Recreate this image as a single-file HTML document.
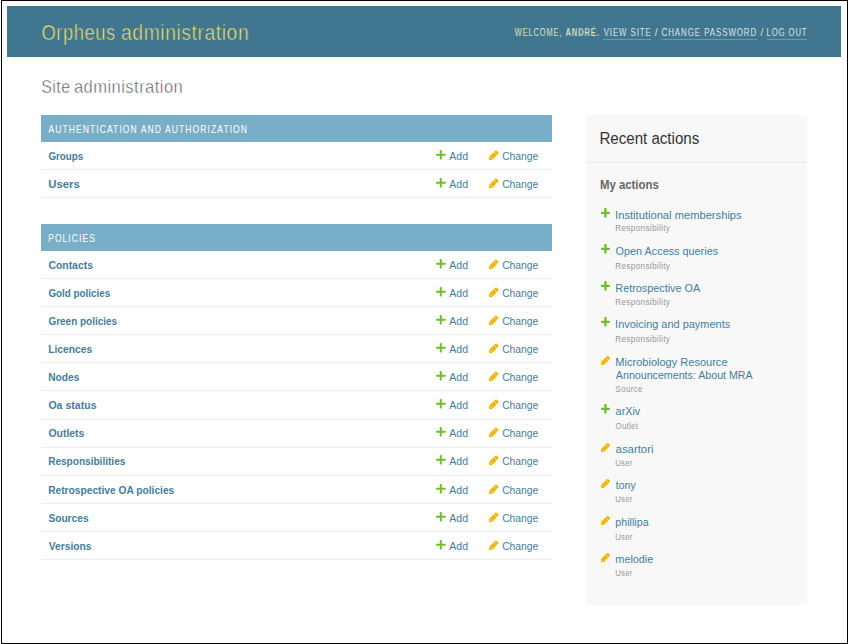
<!DOCTYPE html>
<html><head><meta charset="utf-8"><style>
html,body{margin:0;padding:0;background:#fff;width:848px;height:644px;overflow:hidden;position:relative}
body{font-family:"Liberation Sans", sans-serif}
.b{position:absolute}
.t{position:absolute;white-space:pre;line-height:normal;font-family:"Liberation Sans", sans-serif;transform-origin:0 0}
.bl{display:inline-block;width:0;height:0}
.ic{position:absolute;display:block;overflow:visible}
</style></head><body>
<div class="b" style="left:7px;top:6px;width:834px;height:51px;background:#417690"></div>
<div class="b" style="left:603px;top:39px;width:48px;height:1px;background:rgba(255,255,255,0.25)"></div>
<div class="b" style="left:661px;top:39px;width:95.5px;height:1px;background:rgba(255,255,255,0.25)"></div>
<div class="b" style="left:766.5px;top:39px;width:40.5px;height:1px;background:rgba(255,255,255,0.25)"></div>
<div class="b" style="left:41.4px;top:115px;width:510.6px;height:27px;background:#79aec8"></div>
<div class="b" style="left:41.4px;top:169px;width:510.6px;height:1px;background:#eeeeee"></div>
<div class="b" style="left:41.4px;top:197px;width:510.6px;height:1px;background:#eeeeee"></div>
<div class="b" style="left:41.4px;top:224px;width:510.6px;height:27px;background:#79aec8"></div>
<div class="b" style="left:41.4px;top:278px;width:510.6px;height:1px;background:#eeeeee"></div>
<div class="b" style="left:41.4px;top:306px;width:510.6px;height:1px;background:#eeeeee"></div>
<div class="b" style="left:41.4px;top:334px;width:510.6px;height:1px;background:#eeeeee"></div>
<div class="b" style="left:41.4px;top:362px;width:510.6px;height:1px;background:#eeeeee"></div>
<div class="b" style="left:41.4px;top:390px;width:510.6px;height:1px;background:#eeeeee"></div>
<div class="b" style="left:41.4px;top:419px;width:510.6px;height:1px;background:#eeeeee"></div>
<div class="b" style="left:41.4px;top:447px;width:510.6px;height:1px;background:#eeeeee"></div>
<div class="b" style="left:41.4px;top:475px;width:510.6px;height:1px;background:#eeeeee"></div>
<div class="b" style="left:41.4px;top:503px;width:510.6px;height:1px;background:#eeeeee"></div>
<div class="b" style="left:41.4px;top:531px;width:510.6px;height:1px;background:#eeeeee"></div>
<div class="b" style="left:41.4px;top:559px;width:510.6px;height:1px;background:#eeeeee"></div>
<div class="b" style="left:586px;top:115px;width:221px;height:490px;background:#f8f8f8"></div>
<div class="b" style="left:586px;top:162px;width:221px;height:1px;background:#eaeaea"></div>
<div class="b" style="left:1px;top:0;width:847px;height:644px;box-sizing:border-box;border:1px solid #000"></div>
<svg class="ic" style="left:436.00px;top:150.10px" width="9.60" height="9.60" viewBox="0 0 9.60 9.60"><rect x="0" y="3.80" width="9.60" height="2.0" rx="0.5" fill="#70bf2b"/><rect x="3.80" y="0" width="2.0" height="9.60" rx="0.5" fill="#70bf2b"/></svg>
<svg class="ic" style="left:486.90px;top:148.00px" width="14" height="14" viewBox="0 0 14 14"><path d="M2.00 12.00 L5.10 12.00 L11.25 5.85 Q12.40 4.70 11.25 4.15 L9.85 2.75 Q8.70 2.20 8.15 2.75 L2.00 8.90 Z" fill="#efb80b"/><path d="M6.55 3.55 L10.45 7.45" stroke="#fff" stroke-width="0.45"/><path d="M3.29 9.29 L4.71 10.71" stroke="#fff" stroke-width="0.7"/></svg>
<svg class="ic" style="left:436.00px;top:178.10px" width="9.60" height="9.60" viewBox="0 0 9.60 9.60"><rect x="0" y="3.80" width="9.60" height="2.0" rx="0.5" fill="#70bf2b"/><rect x="3.80" y="0" width="2.0" height="9.60" rx="0.5" fill="#70bf2b"/></svg>
<svg class="ic" style="left:486.90px;top:176.00px" width="14" height="14" viewBox="0 0 14 14"><path d="M2.00 12.00 L5.10 12.00 L11.25 5.85 Q12.40 4.70 11.25 4.15 L9.85 2.75 Q8.70 2.20 8.15 2.75 L2.00 8.90 Z" fill="#efb80b"/><path d="M6.55 3.55 L10.45 7.45" stroke="#fff" stroke-width="0.45"/><path d="M3.29 9.29 L4.71 10.71" stroke="#fff" stroke-width="0.7"/></svg>
<svg class="ic" style="left:436.00px;top:259.10px" width="9.60" height="9.60" viewBox="0 0 9.60 9.60"><rect x="0" y="3.80" width="9.60" height="2.0" rx="0.5" fill="#70bf2b"/><rect x="3.80" y="0" width="2.0" height="9.60" rx="0.5" fill="#70bf2b"/></svg>
<svg class="ic" style="left:486.90px;top:257.00px" width="14" height="14" viewBox="0 0 14 14"><path d="M2.00 12.00 L5.10 12.00 L11.25 5.85 Q12.40 4.70 11.25 4.15 L9.85 2.75 Q8.70 2.20 8.15 2.75 L2.00 8.90 Z" fill="#efb80b"/><path d="M6.55 3.55 L10.45 7.45" stroke="#fff" stroke-width="0.45"/><path d="M3.29 9.29 L4.71 10.71" stroke="#fff" stroke-width="0.7"/></svg>
<svg class="ic" style="left:436.00px;top:287.10px" width="9.60" height="9.60" viewBox="0 0 9.60 9.60"><rect x="0" y="3.80" width="9.60" height="2.0" rx="0.5" fill="#70bf2b"/><rect x="3.80" y="0" width="2.0" height="9.60" rx="0.5" fill="#70bf2b"/></svg>
<svg class="ic" style="left:486.90px;top:285.00px" width="14" height="14" viewBox="0 0 14 14"><path d="M2.00 12.00 L5.10 12.00 L11.25 5.85 Q12.40 4.70 11.25 4.15 L9.85 2.75 Q8.70 2.20 8.15 2.75 L2.00 8.90 Z" fill="#efb80b"/><path d="M6.55 3.55 L10.45 7.45" stroke="#fff" stroke-width="0.45"/><path d="M3.29 9.29 L4.71 10.71" stroke="#fff" stroke-width="0.7"/></svg>
<svg class="ic" style="left:436.00px;top:315.10px" width="9.60" height="9.60" viewBox="0 0 9.60 9.60"><rect x="0" y="3.80" width="9.60" height="2.0" rx="0.5" fill="#70bf2b"/><rect x="3.80" y="0" width="2.0" height="9.60" rx="0.5" fill="#70bf2b"/></svg>
<svg class="ic" style="left:486.90px;top:313.00px" width="14" height="14" viewBox="0 0 14 14"><path d="M2.00 12.00 L5.10 12.00 L11.25 5.85 Q12.40 4.70 11.25 4.15 L9.85 2.75 Q8.70 2.20 8.15 2.75 L2.00 8.90 Z" fill="#efb80b"/><path d="M6.55 3.55 L10.45 7.45" stroke="#fff" stroke-width="0.45"/><path d="M3.29 9.29 L4.71 10.71" stroke="#fff" stroke-width="0.7"/></svg>
<svg class="ic" style="left:436.00px;top:343.10px" width="9.60" height="9.60" viewBox="0 0 9.60 9.60"><rect x="0" y="3.80" width="9.60" height="2.0" rx="0.5" fill="#70bf2b"/><rect x="3.80" y="0" width="2.0" height="9.60" rx="0.5" fill="#70bf2b"/></svg>
<svg class="ic" style="left:486.90px;top:341.00px" width="14" height="14" viewBox="0 0 14 14"><path d="M2.00 12.00 L5.10 12.00 L11.25 5.85 Q12.40 4.70 11.25 4.15 L9.85 2.75 Q8.70 2.20 8.15 2.75 L2.00 8.90 Z" fill="#efb80b"/><path d="M6.55 3.55 L10.45 7.45" stroke="#fff" stroke-width="0.45"/><path d="M3.29 9.29 L4.71 10.71" stroke="#fff" stroke-width="0.7"/></svg>
<svg class="ic" style="left:436.00px;top:371.10px" width="9.60" height="9.60" viewBox="0 0 9.60 9.60"><rect x="0" y="3.80" width="9.60" height="2.0" rx="0.5" fill="#70bf2b"/><rect x="3.80" y="0" width="2.0" height="9.60" rx="0.5" fill="#70bf2b"/></svg>
<svg class="ic" style="left:486.90px;top:369.00px" width="14" height="14" viewBox="0 0 14 14"><path d="M2.00 12.00 L5.10 12.00 L11.25 5.85 Q12.40 4.70 11.25 4.15 L9.85 2.75 Q8.70 2.20 8.15 2.75 L2.00 8.90 Z" fill="#efb80b"/><path d="M6.55 3.55 L10.45 7.45" stroke="#fff" stroke-width="0.45"/><path d="M3.29 9.29 L4.71 10.71" stroke="#fff" stroke-width="0.7"/></svg>
<svg class="ic" style="left:436.00px;top:399.10px" width="9.60" height="9.60" viewBox="0 0 9.60 9.60"><rect x="0" y="3.80" width="9.60" height="2.0" rx="0.5" fill="#70bf2b"/><rect x="3.80" y="0" width="2.0" height="9.60" rx="0.5" fill="#70bf2b"/></svg>
<svg class="ic" style="left:486.90px;top:397.00px" width="14" height="14" viewBox="0 0 14 14"><path d="M2.00 12.00 L5.10 12.00 L11.25 5.85 Q12.40 4.70 11.25 4.15 L9.85 2.75 Q8.70 2.20 8.15 2.75 L2.00 8.90 Z" fill="#efb80b"/><path d="M6.55 3.55 L10.45 7.45" stroke="#fff" stroke-width="0.45"/><path d="M3.29 9.29 L4.71 10.71" stroke="#fff" stroke-width="0.7"/></svg>
<svg class="ic" style="left:436.00px;top:427.10px" width="9.60" height="9.60" viewBox="0 0 9.60 9.60"><rect x="0" y="3.80" width="9.60" height="2.0" rx="0.5" fill="#70bf2b"/><rect x="3.80" y="0" width="2.0" height="9.60" rx="0.5" fill="#70bf2b"/></svg>
<svg class="ic" style="left:486.90px;top:425.00px" width="14" height="14" viewBox="0 0 14 14"><path d="M2.00 12.00 L5.10 12.00 L11.25 5.85 Q12.40 4.70 11.25 4.15 L9.85 2.75 Q8.70 2.20 8.15 2.75 L2.00 8.90 Z" fill="#efb80b"/><path d="M6.55 3.55 L10.45 7.45" stroke="#fff" stroke-width="0.45"/><path d="M3.29 9.29 L4.71 10.71" stroke="#fff" stroke-width="0.7"/></svg>
<svg class="ic" style="left:436.00px;top:455.10px" width="9.60" height="9.60" viewBox="0 0 9.60 9.60"><rect x="0" y="3.80" width="9.60" height="2.0" rx="0.5" fill="#70bf2b"/><rect x="3.80" y="0" width="2.0" height="9.60" rx="0.5" fill="#70bf2b"/></svg>
<svg class="ic" style="left:486.90px;top:453.00px" width="14" height="14" viewBox="0 0 14 14"><path d="M2.00 12.00 L5.10 12.00 L11.25 5.85 Q12.40 4.70 11.25 4.15 L9.85 2.75 Q8.70 2.20 8.15 2.75 L2.00 8.90 Z" fill="#efb80b"/><path d="M6.55 3.55 L10.45 7.45" stroke="#fff" stroke-width="0.45"/><path d="M3.29 9.29 L4.71 10.71" stroke="#fff" stroke-width="0.7"/></svg>
<svg class="ic" style="left:436.00px;top:484.10px" width="9.60" height="9.60" viewBox="0 0 9.60 9.60"><rect x="0" y="3.80" width="9.60" height="2.0" rx="0.5" fill="#70bf2b"/><rect x="3.80" y="0" width="2.0" height="9.60" rx="0.5" fill="#70bf2b"/></svg>
<svg class="ic" style="left:486.90px;top:482.00px" width="14" height="14" viewBox="0 0 14 14"><path d="M2.00 12.00 L5.10 12.00 L11.25 5.85 Q12.40 4.70 11.25 4.15 L9.85 2.75 Q8.70 2.20 8.15 2.75 L2.00 8.90 Z" fill="#efb80b"/><path d="M6.55 3.55 L10.45 7.45" stroke="#fff" stroke-width="0.45"/><path d="M3.29 9.29 L4.71 10.71" stroke="#fff" stroke-width="0.7"/></svg>
<svg class="ic" style="left:436.00px;top:512.10px" width="9.60" height="9.60" viewBox="0 0 9.60 9.60"><rect x="0" y="3.80" width="9.60" height="2.0" rx="0.5" fill="#70bf2b"/><rect x="3.80" y="0" width="2.0" height="9.60" rx="0.5" fill="#70bf2b"/></svg>
<svg class="ic" style="left:486.90px;top:510.00px" width="14" height="14" viewBox="0 0 14 14"><path d="M2.00 12.00 L5.10 12.00 L11.25 5.85 Q12.40 4.70 11.25 4.15 L9.85 2.75 Q8.70 2.20 8.15 2.75 L2.00 8.90 Z" fill="#efb80b"/><path d="M6.55 3.55 L10.45 7.45" stroke="#fff" stroke-width="0.45"/><path d="M3.29 9.29 L4.71 10.71" stroke="#fff" stroke-width="0.7"/></svg>
<svg class="ic" style="left:436.00px;top:540.10px" width="9.60" height="9.60" viewBox="0 0 9.60 9.60"><rect x="0" y="3.80" width="9.60" height="2.0" rx="0.5" fill="#70bf2b"/><rect x="3.80" y="0" width="2.0" height="9.60" rx="0.5" fill="#70bf2b"/></svg>
<svg class="ic" style="left:486.90px;top:538.00px" width="14" height="14" viewBox="0 0 14 14"><path d="M2.00 12.00 L5.10 12.00 L11.25 5.85 Q12.40 4.70 11.25 4.15 L9.85 2.75 Q8.70 2.20 8.15 2.75 L2.00 8.90 Z" fill="#efb80b"/><path d="M6.55 3.55 L10.45 7.45" stroke="#fff" stroke-width="0.45"/><path d="M3.29 9.29 L4.71 10.71" stroke="#fff" stroke-width="0.7"/></svg>
<svg class="ic" style="left:600.85px;top:208.00px" width="8.80" height="9.60" viewBox="0 0 8.80 9.60"><rect x="0" y="3.65" width="8.80" height="2.3" rx="0.5" fill="#70bf2b"/><rect x="3.25" y="0" width="2.3" height="9.60" rx="0.5" fill="#70bf2b"/></svg>
<svg class="ic" style="left:600.85px;top:244.00px" width="8.80" height="9.60" viewBox="0 0 8.80 9.60"><rect x="0" y="3.65" width="8.80" height="2.3" rx="0.5" fill="#70bf2b"/><rect x="3.25" y="0" width="2.3" height="9.60" rx="0.5" fill="#70bf2b"/></svg>
<svg class="ic" style="left:600.85px;top:281.00px" width="8.80" height="9.60" viewBox="0 0 8.80 9.60"><rect x="0" y="3.65" width="8.80" height="2.3" rx="0.5" fill="#70bf2b"/><rect x="3.25" y="0" width="2.3" height="9.60" rx="0.5" fill="#70bf2b"/></svg>
<svg class="ic" style="left:600.85px;top:317.00px" width="8.80" height="9.60" viewBox="0 0 8.80 9.60"><rect x="0" y="3.65" width="8.80" height="2.3" rx="0.5" fill="#70bf2b"/><rect x="3.25" y="0" width="2.3" height="9.60" rx="0.5" fill="#70bf2b"/></svg>
<svg class="ic" style="left:598.90px;top:353.00px" width="14" height="14" viewBox="0 0 14 14"><path d="M2.00 12.00 L4.90 12.00 L10.65 6.25 Q11.80 5.10 10.65 4.55 L9.45 3.35 Q8.30 2.80 7.75 3.35 L2.00 9.10 Z" fill="#efb80b"/><path d="M6.30 4.00 L10.00 7.70" stroke="#f8f8f8" stroke-width="0.45"/><path d="M3.15 10.15 L3.85 10.85" stroke="#f8f8f8" stroke-width="0.7"/></svg>
<svg class="ic" style="left:600.85px;top:404.00px" width="8.80" height="9.60" viewBox="0 0 8.80 9.60"><rect x="0" y="3.65" width="8.80" height="2.3" rx="0.5" fill="#70bf2b"/><rect x="3.25" y="0" width="2.3" height="9.60" rx="0.5" fill="#70bf2b"/></svg>
<svg class="ic" style="left:598.90px;top:440.00px" width="14" height="14" viewBox="0 0 14 14"><path d="M2.00 12.00 L4.90 12.00 L10.65 6.25 Q11.80 5.10 10.65 4.55 L9.45 3.35 Q8.30 2.80 7.75 3.35 L2.00 9.10 Z" fill="#efb80b"/><path d="M6.30 4.00 L10.00 7.70" stroke="#f8f8f8" stroke-width="0.45"/><path d="M3.15 10.15 L3.85 10.85" stroke="#f8f8f8" stroke-width="0.7"/></svg>
<svg class="ic" style="left:598.90px;top:476.00px" width="14" height="14" viewBox="0 0 14 14"><path d="M2.00 12.00 L4.90 12.00 L10.65 6.25 Q11.80 5.10 10.65 4.55 L9.45 3.35 Q8.30 2.80 7.75 3.35 L2.00 9.10 Z" fill="#efb80b"/><path d="M6.30 4.00 L10.00 7.70" stroke="#f8f8f8" stroke-width="0.45"/><path d="M3.15 10.15 L3.85 10.85" stroke="#f8f8f8" stroke-width="0.7"/></svg>
<svg class="ic" style="left:598.90px;top:513.00px" width="14" height="14" viewBox="0 0 14 14"><path d="M2.00 12.00 L4.90 12.00 L10.65 6.25 Q11.80 5.10 10.65 4.55 L9.45 3.35 Q8.30 2.80 7.75 3.35 L2.00 9.10 Z" fill="#efb80b"/><path d="M6.30 4.00 L10.00 7.70" stroke="#f8f8f8" stroke-width="0.45"/><path d="M3.15 10.15 L3.85 10.85" stroke="#f8f8f8" stroke-width="0.7"/></svg>
<svg class="ic" style="left:598.90px;top:550.00px" width="14" height="14" viewBox="0 0 14 14"><path d="M2.00 12.00 L4.90 12.00 L10.65 6.25 Q11.80 5.10 10.65 4.55 L9.45 3.35 Q8.30 2.80 7.75 3.35 L2.00 9.10 Z" fill="#efb80b"/><path d="M6.30 4.00 L10.00 7.70" stroke="#f8f8f8" stroke-width="0.45"/><path d="M3.15 10.15 L3.85 10.85" stroke="#f8f8f8" stroke-width="0.7"/></svg>
<div id="t0" class="t" style="left:41px;top:21.00px;font-size:21.2px;font-weight:400;color:#fbe363;letter-spacing:0.6px;transform:translateX(0.450px) scaleX(0.8682);-webkit-text-stroke:0.55px #417690;">Orpheus<i class="bl"></i></div>
<div id="t1" class="t" style="left:121px;top:21.00px;font-size:21.2px;font-weight:400;color:#fbe363;letter-spacing:0.6px;transform:translateX(0.050px) scaleX(0.9135);-webkit-text-stroke:0.55px #417690;">administration<i class="bl"></i></div>
<div id="t2" class="t" style="left:514px;top:27.00px;font-size:10.0px;font-weight:400;color:#ffffcc;letter-spacing:1.2px;transform:translateX(0.800px) scaleX(0.7432);-webkit-text-stroke:0.2px #417690;">WELCOME,<i class="bl"></i></div>
<div id="t3" class="t" style="left:565px;top:27.00px;font-size:10.0px;font-weight:700;color:#ffffcc;letter-spacing:1.2px;transform:translateX(0.500px) scaleX(0.7512);-webkit-text-stroke:0.35px #417690;">ANDRÉ.<i class="bl"></i></div>
<div id="t4" class="t" style="left:603px;top:27.00px;font-size:10.0px;font-weight:400;color:#ffffff;letter-spacing:1.2px;transform:translateX(0.650px) scaleX(0.7825);-webkit-text-stroke:0.2px #417690;">VIEW SITE<i class="bl"></i></div>
<div id="t5" class="t" style="left:654px;top:27.00px;font-size:10.0px;font-weight:400;color:#ffffcc;letter-spacing:1.2px;transform:translateX(0.800px) scaleX(1.0000);-webkit-text-stroke:0.2px #417690;">/<i class="bl"></i></div>
<div id="t6" class="t" style="left:661px;top:27.00px;font-size:10.0px;font-weight:400;color:#ffffff;letter-spacing:1.2px;transform:translateX(0.550px) scaleX(0.7890);-webkit-text-stroke:0.2px #417690;">CHANGE PASSWORD<i class="bl"></i></div>
<div id="t7" class="t" style="left:760px;top:27.00px;font-size:10.0px;font-weight:400;color:#ffffcc;letter-spacing:1.2px;transform:translateX(0.500px) scaleX(1.0000);-webkit-text-stroke:0.2px #417690;">/<i class="bl"></i></div>
<div id="t8" class="t" style="left:766px;top:27.00px;font-size:10.0px;font-weight:400;color:#ffffff;letter-spacing:1.2px;transform:translateX(0.500px) scaleX(0.7670);-webkit-text-stroke:0.2px #417690;">LOG OUT<i class="bl"></i></div>
<div id="t9" class="t" style="left:41px;top:76.01px;font-size:18.4px;font-weight:400;color:#505050;letter-spacing:0.5px;transform:translateX(0.200px) scaleX(0.8711);-webkit-text-stroke:0.5px #fff;">Site<i class="bl"></i></div>
<div id="t10" class="t" style="left:73px;top:76.01px;font-size:18.4px;font-weight:400;color:#505050;letter-spacing:0.5px;transform:translateX(0.900px) scaleX(0.9002);-webkit-text-stroke:0.5px #fff;">administration<i class="bl"></i></div>
<div id="t11" class="t" style="left:48px;top:124.00px;font-size:10.2px;font-weight:400;color:#ffffff;letter-spacing:1.3px;transform:translateX(0.450px) scaleX(0.8361);">AUTHENTICATION AND AUTHORIZATION<i class="bl"></i></div>
<div id="t12" class="t" style="left:48px;top:233.00px;font-size:10.2px;font-weight:400;color:#ffffff;letter-spacing:1.3px;transform:translateX(0.150px) scaleX(0.8326);">POLICIES<i class="bl"></i></div>
<div id="t13" class="t" style="left:48px;top:150.01px;font-size:11.05px;font-weight:700;color:#447e9b;letter-spacing:0px;transform:translateX(0.400px) scaleX(0.8884);">Groups<i class="bl"></i></div>
<div id="t14" class="t" style="left:449px;top:150.01px;font-size:11.05px;font-weight:400;color:#447e9b;letter-spacing:0px;transform:translateX(0.300px) scaleX(0.9583);">Add<i class="bl"></i></div>
<div id="t15" class="t" style="left:502px;top:150.01px;font-size:11.05px;font-weight:400;color:#447e9b;letter-spacing:0px;transform:translateX(0.150px) scaleX(0.9356);">Change<i class="bl"></i></div>
<div id="t16" class="t" style="left:48px;top:178.01px;font-size:11.05px;font-weight:700;color:#447e9b;letter-spacing:0px;transform:translateX(0.150px) scaleX(1.0317);">Users<i class="bl"></i></div>
<div id="t17" class="t" style="left:449px;top:178.01px;font-size:11.05px;font-weight:400;color:#447e9b;letter-spacing:0px;transform:translateX(0.300px) scaleX(0.9583);">Add<i class="bl"></i></div>
<div id="t18" class="t" style="left:502px;top:178.01px;font-size:11.05px;font-weight:400;color:#447e9b;letter-spacing:0px;transform:translateX(0.150px) scaleX(0.9356);">Change<i class="bl"></i></div>
<div id="t19" class="t" style="left:48px;top:259.01px;font-size:11.05px;font-weight:700;color:#447e9b;letter-spacing:0px;transform:translateX(0.400px) scaleX(0.9431);">Contacts<i class="bl"></i></div>
<div id="t20" class="t" style="left:449px;top:259.01px;font-size:11.05px;font-weight:400;color:#447e9b;letter-spacing:0px;transform:translateX(0.300px) scaleX(0.9583);">Add<i class="bl"></i></div>
<div id="t21" class="t" style="left:502px;top:259.01px;font-size:11.05px;font-weight:400;color:#447e9b;letter-spacing:0px;transform:translateX(0.150px) scaleX(0.9356);">Change<i class="bl"></i></div>
<div id="t22" class="t" style="left:48px;top:287.01px;font-size:11.05px;font-weight:700;color:#447e9b;letter-spacing:0px;transform:translateX(0.400px) scaleX(0.8895);">Gold policies<i class="bl"></i></div>
<div id="t23" class="t" style="left:449px;top:287.01px;font-size:11.05px;font-weight:400;color:#447e9b;letter-spacing:0px;transform:translateX(0.300px) scaleX(0.9583);">Add<i class="bl"></i></div>
<div id="t24" class="t" style="left:502px;top:287.01px;font-size:11.05px;font-weight:400;color:#447e9b;letter-spacing:0px;transform:translateX(0.150px) scaleX(0.9356);">Change<i class="bl"></i></div>
<div id="t25" class="t" style="left:48px;top:315.01px;font-size:11.05px;font-weight:700;color:#447e9b;letter-spacing:0px;transform:translateX(0.400px) scaleX(0.9033);">Green policies<i class="bl"></i></div>
<div id="t26" class="t" style="left:449px;top:315.01px;font-size:11.05px;font-weight:400;color:#447e9b;letter-spacing:0px;transform:translateX(0.300px) scaleX(0.9583);">Add<i class="bl"></i></div>
<div id="t27" class="t" style="left:502px;top:315.01px;font-size:11.05px;font-weight:400;color:#447e9b;letter-spacing:0px;transform:translateX(0.150px) scaleX(0.9356);">Change<i class="bl"></i></div>
<div id="t28" class="t" style="left:48px;top:343.01px;font-size:11.05px;font-weight:700;color:#447e9b;letter-spacing:0px;transform:translateX(0.150px) scaleX(0.9344);">Licences<i class="bl"></i></div>
<div id="t29" class="t" style="left:449px;top:343.01px;font-size:11.05px;font-weight:400;color:#447e9b;letter-spacing:0px;transform:translateX(0.300px) scaleX(0.9583);">Add<i class="bl"></i></div>
<div id="t30" class="t" style="left:502px;top:343.01px;font-size:11.05px;font-weight:400;color:#447e9b;letter-spacing:0px;transform:translateX(0.150px) scaleX(0.9356);">Change<i class="bl"></i></div>
<div id="t31" class="t" style="left:48px;top:371.01px;font-size:11.05px;font-weight:700;color:#447e9b;letter-spacing:0px;transform:translateX(0.150px) scaleX(0.9228);">Nodes<i class="bl"></i></div>
<div id="t32" class="t" style="left:449px;top:371.01px;font-size:11.05px;font-weight:400;color:#447e9b;letter-spacing:0px;transform:translateX(0.300px) scaleX(0.9583);">Add<i class="bl"></i></div>
<div id="t33" class="t" style="left:502px;top:371.01px;font-size:11.05px;font-weight:400;color:#447e9b;letter-spacing:0px;transform:translateX(0.150px) scaleX(0.9356);">Change<i class="bl"></i></div>
<div id="t34" class="t" style="left:48px;top:399.01px;font-size:11.05px;font-weight:700;color:#447e9b;letter-spacing:0px;transform:translateX(0.400px) scaleX(0.9558);">Oa status<i class="bl"></i></div>
<div id="t35" class="t" style="left:449px;top:399.01px;font-size:11.05px;font-weight:400;color:#447e9b;letter-spacing:0px;transform:translateX(0.300px) scaleX(0.9583);">Add<i class="bl"></i></div>
<div id="t36" class="t" style="left:502px;top:399.01px;font-size:11.05px;font-weight:400;color:#447e9b;letter-spacing:0px;transform:translateX(0.150px) scaleX(0.9356);">Change<i class="bl"></i></div>
<div id="t37" class="t" style="left:48px;top:427.01px;font-size:11.05px;font-weight:700;color:#447e9b;letter-spacing:0px;transform:translateX(0.400px) scaleX(0.9464);">Outlets<i class="bl"></i></div>
<div id="t38" class="t" style="left:449px;top:427.01px;font-size:11.05px;font-weight:400;color:#447e9b;letter-spacing:0px;transform:translateX(0.300px) scaleX(0.9583);">Add<i class="bl"></i></div>
<div id="t39" class="t" style="left:502px;top:427.01px;font-size:11.05px;font-weight:400;color:#447e9b;letter-spacing:0px;transform:translateX(0.150px) scaleX(0.9356);">Change<i class="bl"></i></div>
<div id="t40" class="t" style="left:48px;top:455.01px;font-size:11.05px;font-weight:700;color:#447e9b;letter-spacing:0px;transform:translateX(0.150px) scaleX(0.9113);">Responsibilities<i class="bl"></i></div>
<div id="t41" class="t" style="left:449px;top:455.01px;font-size:11.05px;font-weight:400;color:#447e9b;letter-spacing:0px;transform:translateX(0.300px) scaleX(0.9583);">Add<i class="bl"></i></div>
<div id="t42" class="t" style="left:502px;top:455.01px;font-size:11.05px;font-weight:400;color:#447e9b;letter-spacing:0px;transform:translateX(0.150px) scaleX(0.9356);">Change<i class="bl"></i></div>
<div id="t43" class="t" style="left:48px;top:484.01px;font-size:11.05px;font-weight:700;color:#447e9b;letter-spacing:0px;transform:translateX(0.150px) scaleX(0.9241);">Retrospective OA policies<i class="bl"></i></div>
<div id="t44" class="t" style="left:449px;top:484.01px;font-size:11.05px;font-weight:400;color:#447e9b;letter-spacing:0px;transform:translateX(0.300px) scaleX(0.9583);">Add<i class="bl"></i></div>
<div id="t45" class="t" style="left:502px;top:484.01px;font-size:11.05px;font-weight:400;color:#447e9b;letter-spacing:0px;transform:translateX(0.150px) scaleX(0.9356);">Change<i class="bl"></i></div>
<div id="t46" class="t" style="left:48px;top:512.01px;font-size:11.05px;font-weight:700;color:#447e9b;letter-spacing:0px;transform:translateX(0.400px) scaleX(0.9210);">Sources<i class="bl"></i></div>
<div id="t47" class="t" style="left:449px;top:512.01px;font-size:11.05px;font-weight:400;color:#447e9b;letter-spacing:0px;transform:translateX(0.300px) scaleX(0.9583);">Add<i class="bl"></i></div>
<div id="t48" class="t" style="left:502px;top:512.01px;font-size:11.05px;font-weight:400;color:#447e9b;letter-spacing:0px;transform:translateX(0.150px) scaleX(0.9356);">Change<i class="bl"></i></div>
<div id="t49" class="t" style="left:48px;top:540.01px;font-size:11.05px;font-weight:700;color:#447e9b;letter-spacing:0px;transform:translateX(0.650px) scaleX(0.9309);">Versions<i class="bl"></i></div>
<div id="t50" class="t" style="left:449px;top:540.01px;font-size:11.05px;font-weight:400;color:#447e9b;letter-spacing:0px;transform:translateX(0.300px) scaleX(0.9583);">Add<i class="bl"></i></div>
<div id="t51" class="t" style="left:502px;top:540.01px;font-size:11.05px;font-weight:400;color:#447e9b;letter-spacing:0px;transform:translateX(0.150px) scaleX(0.9356);">Change<i class="bl"></i></div>
<div id="t52" class="t" style="left:599px;top:130.00px;font-size:16.0px;font-weight:400;color:#333333;letter-spacing:0px;transform:translateX(0.400px) scaleX(0.9434);">Recent actions<i class="bl"></i></div>
<div id="t53" class="t" style="left:599px;top:177.01px;font-size:13.4px;font-weight:700;color:#666666;letter-spacing:0px;transform:translateX(0.900px) scaleX(0.8510);">My actions<i class="bl"></i></div>
<div id="t54" class="t" style="left:615px;top:209.00px;font-size:11.2px;font-weight:400;color:#447e9b;letter-spacing:0px;transform:translateX(0.100px) scaleX(0.9976);">Institutional memberships<i class="bl"></i></div>
<div id="t55" class="t" style="left:615px;top:222.01px;font-size:9.6px;font-weight:400;color:#999999;letter-spacing:0.35px;transform:translateX(0.250px) scaleX(0.8577);">Responsibility<i class="bl"></i></div>
<div id="t56" class="t" style="left:615px;top:245.00px;font-size:11.2px;font-weight:400;color:#447e9b;letter-spacing:0px;transform:translateX(0.600px) scaleX(0.9695);">Open Access queries<i class="bl"></i></div>
<div id="t57" class="t" style="left:615px;top:260.01px;font-size:9.6px;font-weight:400;color:#999999;letter-spacing:0.35px;transform:translateX(0.250px) scaleX(0.8577);">Responsibility<i class="bl"></i></div>
<div id="t58" class="t" style="left:615px;top:282.00px;font-size:11.2px;font-weight:400;color:#447e9b;letter-spacing:0px;transform:translateX(0.350px) scaleX(0.9679);">Retrospective OA<i class="bl"></i></div>
<div id="t59" class="t" style="left:615px;top:296.01px;font-size:9.6px;font-weight:400;color:#999999;letter-spacing:0.35px;transform:translateX(0.250px) scaleX(0.8577);">Responsibility<i class="bl"></i></div>
<div id="t60" class="t" style="left:615px;top:318.00px;font-size:11.2px;font-weight:400;color:#447e9b;letter-spacing:0px;transform:translateX(0.100px) scaleX(0.9790);">Invoicing and payments<i class="bl"></i></div>
<div id="t61" class="t" style="left:615px;top:333.01px;font-size:9.6px;font-weight:400;color:#999999;letter-spacing:0.35px;transform:translateX(0.250px) scaleX(0.8577);">Responsibility<i class="bl"></i></div>
<div id="t62" class="t" style="left:615px;top:356.00px;font-size:11.2px;font-weight:400;color:#447e9b;letter-spacing:0px;transform:translateX(0.350px) scaleX(0.9858);">Microbiology Resource<i class="bl"></i></div>
<div id="t63" class="t" style="left:615px;top:369.00px;font-size:11.2px;font-weight:400;color:#447e9b;letter-spacing:0px;transform:translateX(0.850px) scaleX(0.9524);">Announcements: About MRA<i class="bl"></i></div>
<div id="t64" class="t" style="left:615px;top:383.01px;font-size:9.6px;font-weight:400;color:#999999;letter-spacing:0.35px;transform:translateX(0.500px) scaleX(0.8382);">Source<i class="bl"></i></div>
<div id="t65" class="t" style="left:615px;top:405.00px;font-size:11.2px;font-weight:400;color:#447e9b;letter-spacing:0px;transform:translateX(0.600px) scaleX(0.9684);">arXiv<i class="bl"></i></div>
<div id="t66" class="t" style="left:615px;top:420.01px;font-size:9.6px;font-weight:400;color:#999999;letter-spacing:0.35px;transform:translateX(0.500px) scaleX(0.8165);">Outlet<i class="bl"></i></div>
<div id="t67" class="t" style="left:615px;top:443.00px;font-size:11.2px;font-weight:400;color:#447e9b;letter-spacing:0px;transform:translateX(0.600px) scaleX(1.0151);">asartori<i class="bl"></i></div>
<div id="t68" class="t" style="left:615px;top:457.01px;font-size:9.6px;font-weight:400;color:#999999;letter-spacing:0.35px;transform:translateX(0.250px) scaleX(0.8050);">User<i class="bl"></i></div>
<div id="t69" class="t" style="left:615px;top:479.00px;font-size:11.2px;font-weight:400;color:#447e9b;letter-spacing:0px;transform:translateX(0.850px) scaleX(0.9385);">tony<i class="bl"></i></div>
<div id="t70" class="t" style="left:615px;top:493.01px;font-size:9.6px;font-weight:400;color:#999999;letter-spacing:0.35px;transform:translateX(0.250px) scaleX(0.8050);">User<i class="bl"></i></div>
<div id="t71" class="t" style="left:615px;top:516.00px;font-size:11.2px;font-weight:400;color:#447e9b;letter-spacing:0px;transform:translateX(0.350px) scaleX(0.9552);">phillipa<i class="bl"></i></div>
<div id="t72" class="t" style="left:615px;top:531.01px;font-size:9.6px;font-weight:400;color:#999999;letter-spacing:0.35px;transform:translateX(0.250px) scaleX(0.8050);">User<i class="bl"></i></div>
<div id="t73" class="t" style="left:615px;top:553.00px;font-size:11.2px;font-weight:400;color:#447e9b;letter-spacing:0px;transform:translateX(0.350px) scaleX(0.9687);">melodie<i class="bl"></i></div>
<div id="t74" class="t" style="left:615px;top:567.01px;font-size:9.6px;font-weight:400;color:#999999;letter-spacing:0.35px;transform:translateX(0.250px) scaleX(0.8050);">User<i class="bl"></i></div>
</body></html>
